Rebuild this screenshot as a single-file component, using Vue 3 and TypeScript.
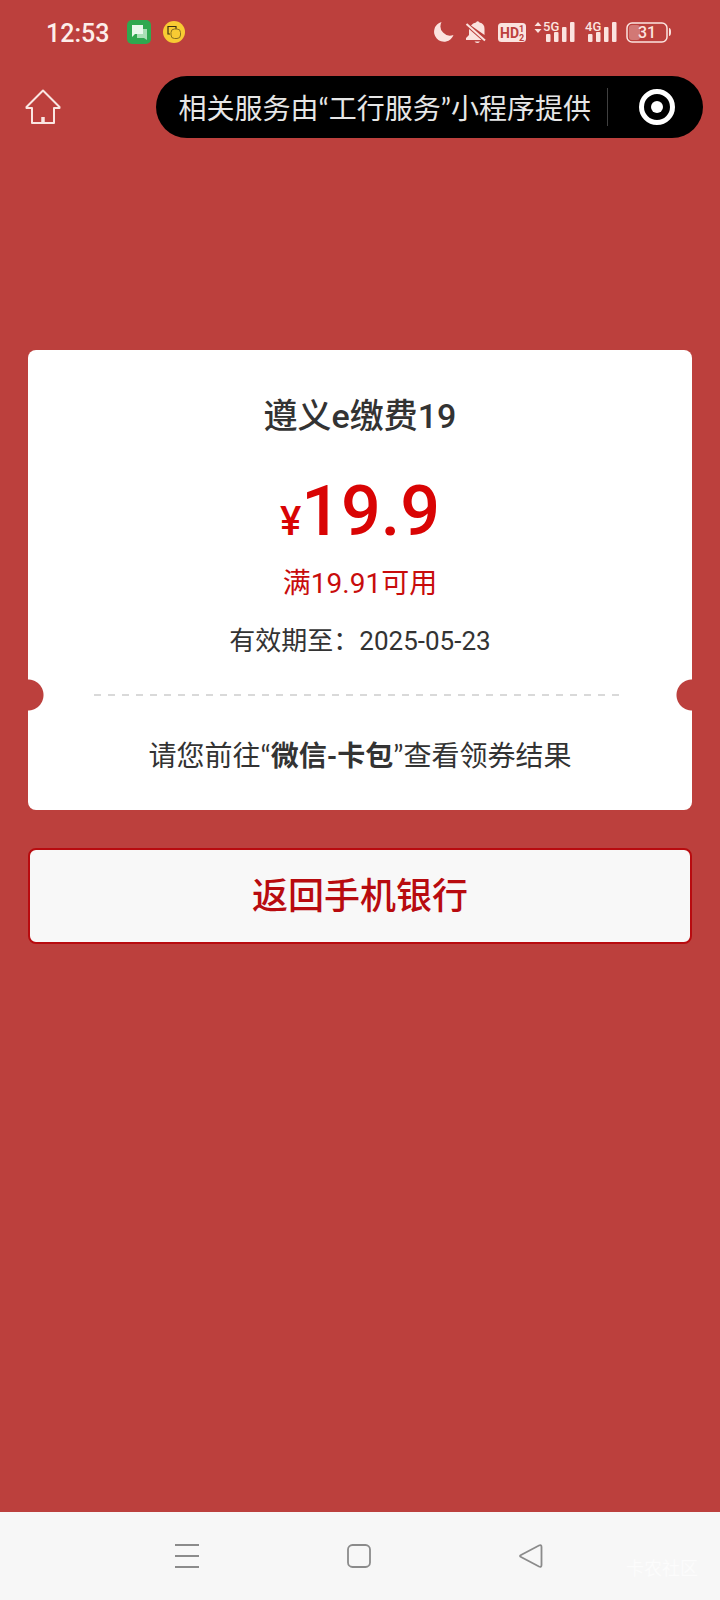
<script setup lang="ts">
interface Coupon {
  title: string
  amount: string
  condition: string
  expires: string
}

const coupon: Coupon = {
  title: '遵义e缴费19',
  amount: '19.9',
  condition: '满19.91可用',
  expires: '2025-05-23',
}
</script>

<template>
  <div class="screen">
    <header class="status">
      <div class="status-side">
        <time class="clock">12:53</time>
        <svg class="app-icon" width="24" height="24" viewBox="0 0 24 24" aria-hidden="true">
          <rect width="24" height="24" rx="5" fill="#2fa84f" />
          <path d="M10 9h10v11l-3-2h-7z" fill="#a9dfb5" />
          <path d="M5 5h11v9H8l-3 3z" fill="#e9f8ec" />
        </svg>
        <svg class="app-icon" width="22" height="22" viewBox="0 0 22 22" aria-hidden="true">
          <circle cx="11" cy="11" r="11" fill="#f8cb33" />
          <path d="M7 13H5V5.500h8V8" fill="none" stroke="#3b3013" stroke-width="1.200" />
          <rect x="8" y="8" width="9.500" height="9.500" rx="3.500" fill="none" stroke="#8a701f" />
        </svg>
      </div>
      <svg class="signals" width="238" height="28" viewBox="0 0 238 28" role="img" aria-label="31%">
        <g fill="#fbe3df">
          <path d="M7.500 4A10 10 0 1 0 19.500 17 9.500 9.500 0 0 1 7.500 4z" />
          <path d="M37 7.500a7 7 0 0 1 5-3q1.500-2.500 3.500 0a6.500 6.500 0 0 1 5 6.500v6z" />
          <path d="M35 11 47.500 22H32v-2l3-3z" />
          <path d="M40.500 23.500h5.500q-2.500 3-5.500 0z" />
          <path d="m32.500 6 18.500 16.500" stroke="#fbe3df" stroke-width="2" />
          <rect x="64" y="5" width="28" height="19" rx="3.500" />
          <path d="M100.500 8l3.500-4 3.500 4zM100.500 11h7l-3.500 4z" />
          <rect x="112" y="16" width="4.500" height="8" rx="1" />
          <rect x="120" y="14" width="4.500" height="10" rx="1" />
          <rect x="128" y="9" width="4.500" height="15" rx="1" />
          <rect x="136" y="4" width="4.500" height="20" rx="1" />
          <rect x="154" y="16" width="4.500" height="8" rx="1" />
          <rect x="162" y="14" width="4.500" height="10" rx="1" />
          <rect x="170" y="9" width="4.500" height="15" rx="1" />
          <rect x="178" y="4" width="4.500" height="20" rx="1" />
          <rect x="195" y="7" width="11" height="15" rx="3" opacity="0.350" />
          <path d="M235 10q2 0 2 4t-2 4z" />
        </g>
        <rect x="193" y="5" width="40" height="19" rx="5" fill="none" stroke="#fbe3df" stroke-width="1.500" />
        <text class="tag dark" x="66" y="20">HD</text>
        <text class="tiny dark" x="85" y="14">1</text>
        <text class="tiny dark" x="85" y="23">2</text>
        <text class="net" x="109" y="13">5G</text>
        <text class="net" x="151" y="13">4G</text>
        <text class="level" x="204" y="20">31</text>
      </svg>
    </header>

    <nav class="topbar">
      <button class="plain" type="button" aria-label="首页">
        <svg width="36" height="36" viewBox="0 0 36 36" fill="none" stroke="#fae6e2" stroke-width="2" stroke-linejoin="round">
          <path d="M18 1.500 1.500 18v1H7v15h22V19h5.500v-1z" />
          <path d="M18 28v5" stroke-width="3.500" />
        </svg>
      </button>
      <div class="capsule">
        <span class="provider">相关服务由“工行服务”小程序提供</span>
        <button class="plain close" type="button" aria-label="关闭">
          <svg width="36" height="36" viewBox="0 0 36 36">
            <circle cx="18" cy="18" r="15.500" fill="none" stroke="#fff" stroke-width="5" />
            <circle cx="18" cy="18" r="6" fill="#fff" />
          </svg>
        </button>
      </div>
    </nav>

    <main class="content">
      <section class="coupon">
        <h1 class="title">{{ coupon.title }}</h1>
        <p class="price"><span class="currency">¥</span>{{ coupon.amount }}</p>
        <p class="condition">{{ coupon.condition }}</p>
        <p class="expires">有效期至：{{ coupon.expires }}</p>
        <div class="tear"><i class="dashes"></i></div>
        <p class="hint">请您前往“<b>微信-卡包</b>”查看领券结果</p>
      </section>
      <button class="back" type="button">返回手机银行</button>
    </main>

    <footer class="system">
      <button class="plain" type="button" aria-label="最近任务">
        <svg width="24" height="26" viewBox="0 0 24 26" stroke="#8b8b8b" stroke-width="2">
          <path d="M0 2h24M0 13h24M0 24h24" />
        </svg>
      </button>
      <button class="plain" type="button" aria-label="主屏幕">
        <svg width="24" height="26" viewBox="0 0 24 26" fill="none" stroke="#8b8b8b" stroke-width="1.800">
          <rect x="1" y="2" width="22" height="22" rx="4.500" />
        </svg>
      </button>
      <button class="plain" type="button" aria-label="返回">
        <svg width="24" height="26" viewBox="0 0 24 26" fill="none" stroke="#8b8b8b" stroke-width="1.800" stroke-linejoin="round">
          <path d="M2 12 20 2.500q2.500-1 2.500 1.500v18q0 2.500-2.500 1.500L2 14q-2-1 0-2z" />
        </svg>
      </button>
      <span class="watermark">卡农社区</span>
    </footer>
  </div>
</template>

<style>
body {
  margin: 0;
  background: #bc403d;
}
</style>

<style scoped>
.screen {
  display: flex;
  flex-direction: column;
  min-height: 100vh;
  background: #bc403d;
  color: #333;
  font-family: Roboto, "Noto Sans CJK SC", sans-serif;
}

.status {
  display: flex;
  justify-content: space-between;
  align-items: center;
  height: 64px;
  padding: 0 48px 0 46px;
}

.status-side {
  display: flex;
  align-items: center;
}

.clock {
  padding-top: 3px;
  color: #fdeeea;
  font-size: 25px;
  font-weight: 500;
  line-height: 32px;
}

.app-icon {
  margin-left: 12px;
}

.app-icon:first-of-type {
  margin-left: 18px;
}

.signals text {
  fill: #fbe3df;
  font-weight: 500;
}

.signals .dark {
  fill: #bc403d;
}

.signals .tag {
  font-size: 14px;
  font-weight: 700;
}

.signals .tiny {
  font-size: 9px;
  font-weight: 700;
}

.signals .net {
  font-size: 13px;
}

.signals .level {
  font-size: 16px;
}

.topbar {
  display: flex;
  justify-content: space-between;
  align-items: center;
  padding: 12px 17px 0 25px;
}

.plain {
  display: flex;
  align-items: center;
  justify-content: center;
  padding: 0;
  border: 0;
  background: none;
}

.capsule {
  display: flex;
  align-items: center;
  height: 62px;
  padding-left: 23px;
  border-radius: 31px;
  background: #000;
}

.provider {
  padding: 2px 16px 0 0;
  color: #e6e6e6;
  font-family: Lato, "Noto Sans CJK SC", sans-serif;
  font-size: 28px;
  line-height: 40px;
  white-space: nowrap;
}

.close {
  height: 38px;
  padding: 0 28px 0 31px;
  border-left: 1px solid #404040;
}

.content {
  flex: 1;
  padding: 212px 28px 0;
}

.coupon {
  display: flex;
  flex-direction: column;
  border-radius: 8px;
  background: #fff;
  text-align: center;
}

.coupon p {
  margin: 0;
}

.title {
  margin: 41px 0 0;
  font-size: 34px;
  font-weight: 500;
  line-height: 50px;
}

.price {
  padding-top: 32px;
  color: #d90404;
  font-size: 70px;
  font-weight: 500;
  line-height: 76px;
}

.currency {
  font-size: 40px;
}

.condition {
  padding-top: 4px;
  color: #c80c0c;
  font-size: 28px;
  line-height: 40px;
}

.expires {
  padding-top: 17px;
  font-size: 26px;
  line-height: 40px;
}

.tear {
  display: flex;
  align-items: center;
  height: 32px;
  margin-top: 18px;
  padding: 0 72px 0 66px;
  background:
    radial-gradient(circle at 0 50%, #bc403d 15px, transparent 16px),
    radial-gradient(circle at 100% 50%, #bc403d 15px, transparent 16px);
}

.dashes {
  flex: 1;
  height: 2px;
  background: repeating-linear-gradient(90deg, #d9d9d9 0 7px, transparent 7px 14px);
}

.hint {
  padding: 24px 0 35px;
  font-family: Lato, "Noto Sans CJK SC", sans-serif;
  font-size: 28px;
  line-height: 40px;
}

.back {
  display: block;
  width: 100%;
  height: 96px;
  margin-top: 38px;
  padding: 0 0 6px;
  border: 2px solid #b80b0f;
  border-radius: 8px;
  background: #f8f8f8;
  color: #b80b0f;
  font-family: inherit;
  font-size: 36px;
  font-weight: 500;
}

.system {
  position: relative;
  display: flex;
  justify-content: center;
  align-items: center;
  gap: 148px;
  height: 88px;
  padding-right: 2px;
  background: #f7f7f7;
}

.watermark {
  position: absolute;
  right: 22px;
  bottom: 18px;
  color: #fcfcfc;
  font-size: 18px;
  line-height: 26px;
}
</style>
